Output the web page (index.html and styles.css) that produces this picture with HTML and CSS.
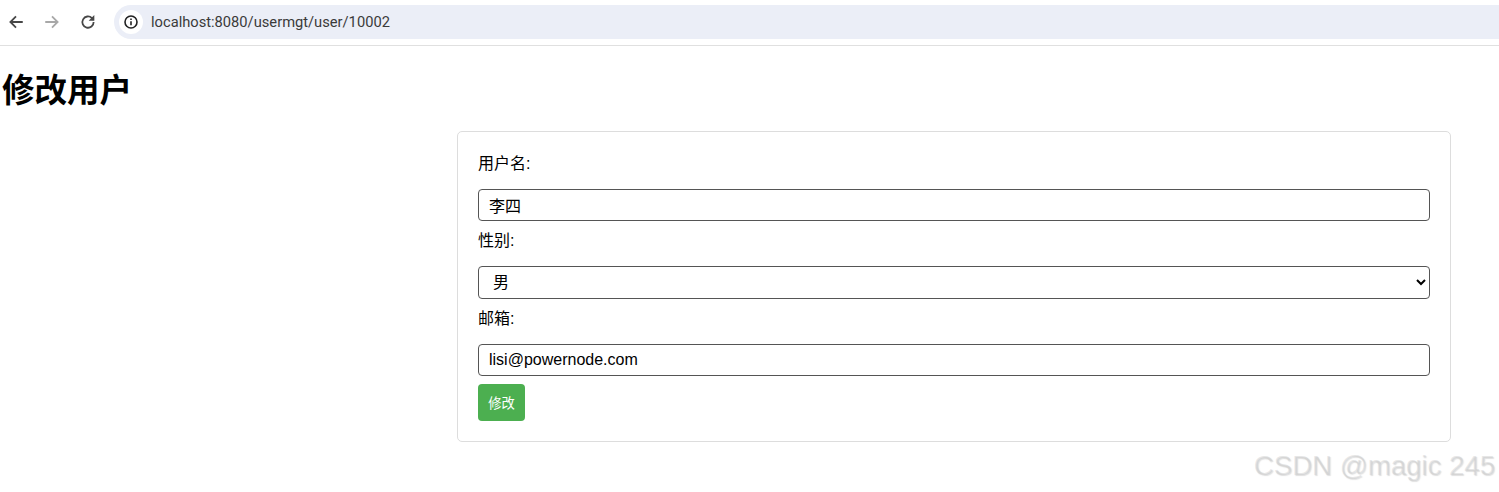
FILE: index.html
```html
<!DOCTYPE html>
<html lang="zh-CN">
<head>
  <meta charset="UTF-8">
  <meta name="viewport" content="width=device-width, initial-scale=1.0">
  <title>修改用户</title>
  <link rel="stylesheet" href="styles.css">
</head>
<body>

  <!-- Browser toolbar -->
  <header class="toolbar">
    <svg class="nav-icon" viewBox="0 0 16 16"><path d="M14 8H3M8 3 3 8l5 5" fill="none" stroke="#474747" stroke-width="1.6"/></svg>
    <svg class="nav-icon" viewBox="0 0 16 16"><path d="M2 8h11M8 3l5 5-5 5" fill="none" stroke="#a8a8a8" stroke-width="1.6"/></svg>
    <svg class="nav-icon" viewBox="0 0 16 16"><path d="M13 8a5 5 0 1 1-1.5-3.5L13 6" fill="none" stroke="#474747" stroke-width="1.6"/><path d="M13.6 1.8v5h-5z" fill="#474747"/></svg>
    <div class="address-bar">
      <span class="site-info">
        <svg viewBox="0 0 16 16" width="16" height="16"><circle cx="8" cy="8" r="6" fill="none" stroke="#222" stroke-width="1.6"/><path d="M8 7.2v4M8 4.4v1.6" stroke="#222" stroke-width="1.6"/></svg>
      </span>
      <span class="url">localhost:8080/usermgt/user/10002</span>
    </div>
  </header>

  <main>
    <h1>修改用户</h1>

    <!-- Edit form -->
    <form class="user-form">
      <label for="username">用户名:</label>
      <input id="username" type="text" value="李四">

      <label for="gender">性别:</label>
      <select id="gender">
        <option>男</option>
        <option>女</option>
      </select>

      <label for="email">邮箱:</label>
      <input id="email" type="text" value="lisi@powernode.com">

      <button type="button" class="submit-btn">修改</button>
    </form>
  </main>

  <div class="watermark">CSDN @magic 245</div>

</body>
</html>
```

FILE: styles.css
```css
/* General Styling */
* {
  margin: 0;
  padding: 0;
  box-sizing: border-box;
  font-family: Arial, "Liberation Sans", "Noto Sans CJK SC", sans-serif;
}

body {
  background-color: #fff;
  color: #000;
  height: 492px;
  overflow: hidden;
}

/* Browser toolbar */
.toolbar {
  display: flex;
  align-items: center;
  height: 46px;
  padding: 0 0 1px 7px;
  border-bottom: 1px solid #e0e0e0;
}

.nav-icon {
  width: 18px;
  height: 18px;
  margin-right: 18px;
}

.address-bar {
  display: flex;
  align-items: center;
  flex: 1;
  height: 34px;
  margin-left: -1px;
  padding-left: 5px;
  background-color: #ebeef7;
  border-radius: 17px 0 0 17px;
}

.site-info {
  display: flex;
  align-items: center;
  justify-content: center;
  width: 24px;
  height: 24px;
  background-color: #fff;
  border-radius: 50%;
}

.url {
  margin-left: 8px;
  font-family: Roboto, sans-serif;
  font-size: 14.7px;
  color: #3a3a3a;
}

/* Heading */
h1 {
  margin: 26px 0 21px 2px;
  font-size: 32.5px;
  line-height: 38px;
}

/* Form card */
.user-form {
  width: 994px;
  height: 311px;
  margin-left: 457px;
  padding: 20px;
  border: 1px solid #ddd;
  border-radius: 5px;
}

.user-form label {
  display: block;
  height: 37px;
  padding-top: 3px;
  font-size: 16px;
  line-height: 18px;
}

.user-form input,
.user-form select {
  display: block;
  width: 100%;
  margin-bottom: 8px;
  border: 1px solid #555;
  border-radius: 4px;
  background-color: #fff;
  color: #000;
  font-size: 16px;
}

.user-form input {
  height: 32px;
  padding: 0 10px;
}

.user-form select {
  height: 33px;
  padding-left: 10px;
}

.submit-btn {
  display: block;
  width: 47px;
  height: 37px;
  background-color: #4CAF50;
  color: white;
  border: none;
  border-radius: 4px;
  font-size: 13.3px;
}

/* CSDN watermark */
.watermark {
  position: absolute;
  right: 4px;
  top: 449px;
  font-size: 27.6px;
  line-height: 34px;
  color: rgba(190, 190, 190, 0.35);
  text-shadow: 1px 1px 1px rgba(130, 130, 130, 0.25);
}
```
